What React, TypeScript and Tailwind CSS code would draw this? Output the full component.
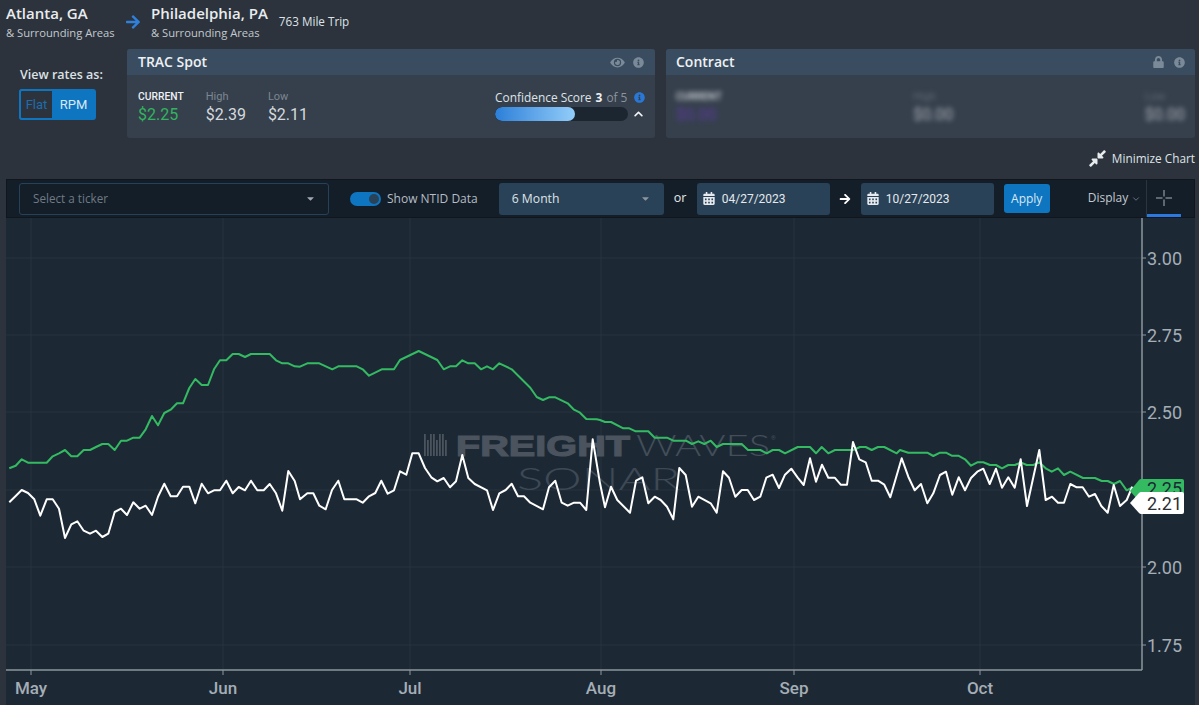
import React from "react";
import { FaEye, FaInfoCircle, FaLock, FaCalendarAlt, FaArrowRight, FaChevronUp, FaCompressAlt, FaCaretDown } from "react-icons/fa";
import { ChevronDown } from "lucide-react";

const seg = (ox: number, oy: number, a: number[]) => {
  const out: string[] = [];
  for (let i = 0; i < a.length; i += 2) out.push(`${(ox + a[i] / 3).toFixed(1)},${(oy + a[i + 1] / 3).toFixed(1)}`);
  return out;
};

const green = [
  ...seg(0, 340, [28,385,47,377,65,358,84,368,103,368,121,368,140,368,158,349,177,340,195,330,214,349,232,349,251,330,270,330,288,321,307,312,325,312,344,330,363,302,381,302,400,293,419,293,437,268,456,228,474,256,493,219,512,209,531,190,549,190,568,144,586,117,605,135,624,135,642,88,660,61,679,61,698,42,716,42,735,51,753,42,772,42,791,42,809,42,828,61,847,70,865,70,884,79]),
  ...seg(300, 340, [0,80,22,70,58,70,97,88,115,79,170,79,188,88,207,107,245,88,282,88,300,60,356,33,412,60,431,88,450,79,468,79,487,61,505,70,524,70,543,88,561,79,579,88,598,70,635,88,691,143,710,171,729,180,747,172,766,172,803,190,822,209,840,218,859,237,890,238]),
  ...seg(600, 400, [0,60,15,66,33,66,70,85,88,85,107,94,145,94,164,113,201,113,220,122,258,122,276,132,295,124,313,132,332,122,350,141,369,132,425,132,444,150,481,150,500,160,518,150,537,150,555,160,593,141,630,141,648,160,665,141,685,160,705,150,760,150,780,141,797,141,815,150,834,141,853,141,890,160]),
  ...seg(900, 420, [0,90,25,98,82,98,100,108,120,98,138,98,155,107,175,107,195,118,213,137,232,127,250,127,270,135,288,135,306,145,325,135,345,135,362,127,380,135,400,135,418,127,437,145,455,155,474,145,492,165,511,155,549,174,585,174,605,183,623,183,642,192,660,183,680,211,697,202]),
].join(" ");

const white = [
  ...seg(0, 340, [28,487,47,468,65,450,84,459,103,478,121,527,140,478,158,478,177,506,195,594,214,553,232,544,251,572,270,581,288,572,307,591,325,581,344,516,363,506,381,525,400,487,419,506,437,497,456,525,474,470,493,431,512,469,531,469,549,440,568,440,586,490,605,431,624,460,642,451,660,451,679,422,698,460,716,441,735,451,753,422,772,451,791,451,809,432,828,460,847,512,865,393,884,423]),
  ...seg(300, 340, [0,478,22,460,40,460,58,497,77,508,96,450,115,422,133,478,170,478,188,488,207,469,226,459,244,422,263,461,282,451,300,394,319,404,337,340,356,340,375,384,394,412,412,424,431,414,450,442,468,424,487,345,505,414,524,432,561,451,579,510,598,460,617,450,635,431,654,469,672,469,691,488,729,508,747,442,766,422,785,488,803,497,822,488,840,488,859,510,878,298]),
  ...seg(600, 400, [0,250,15,322,33,260,52,300,90,338,108,242,127,232,145,310,164,290,182,300,201,320,220,358,238,204,257,225,276,320,295,290,332,310,350,338,369,214,387,233,406,290,425,270,443,270,462,300,481,290,499,233,518,224,537,264,555,224,574,206,593,233,611,255,630,175,648,245,666,194,685,233,704,233,722,254,741,254,759,126,778,178,797,187,815,242,834,242,853,254,871,292]),
  ...seg(900, 420, [5,115,25,170,44,211,63,192,82,250,100,220,120,165,138,155,157,224,176,172,195,211,213,174,232,155,250,146,269,192,288,146,306,203,325,172,344,203,362,118,381,258,418,90,437,240,456,230,474,248,492,248,511,192,530,202,548,202,567,230,585,222,604,258,623,278,641,195,660,258,680,240,697,200]),
].join(" ");

const yTicks = [
  { y: 258, l: "3.00" },
  { y: 335, l: "2.75" },
  { y: 412, l: "2.50" },
  { y: 490, l: "" },
  { y: 567, l: "2.00" },
  { y: 645, l: "1.75" },
];
const xTicks = [
  { x: 31, l: "May" },
  { x: 223, l: "Jun" },
  { x: 410, l: "Jul" },
  { x: 601, l: "Aug" },
  { x: 794, l: "Sep" },
  { x: 980, l: "Oct" },
];

function Chart() {
  return (
    <svg viewBox="6 218 1189 487" className="block w-[1189px] h-[487px] bg-[#1c2935]" style={{ fontFamily: "Roboto, sans-serif" }}>
      {yTicks.map((t) => (
        <line key={t.y} x1={6} x2={1142} y1={t.y} y2={t.y} stroke="#27353f" strokeWidth={1} />
      ))}
      {xTicks.map((t) => (
        <line key={t.x} x1={t.x} x2={t.x} y1={218} y2={670} stroke="#27353f" strokeWidth={1} />
      ))}
      {/* watermark */}
      <g fill="#4a535e">
        {[424, 427, 430, 433, 436, 439, 442, 445].map((x, i) => (
          <rect key={x} x={x} y={i % 3 === 1 ? 440 : 434} width={1.8} height={i % 3 === 1 ? 16 : 22} />
        ))}
        <text x={456} y={456} fontSize={30} fontWeight={700} stroke="#4a535e" strokeWidth={1.2} textLength={174} lengthAdjust="spacingAndGlyphs" style={{ fontFamily: "Liberation Sans, sans-serif" }}>FREIGHT</text>
        <text x={636} y={456} fontSize={30} fontWeight={300} textLength={134} lengthAdjust="spacingAndGlyphs" fill="#434e59" style={{ fontFamily: "Lato, sans-serif" }}>WAVES</text>
        <text x={771} y={440} fontSize={6} fill="#434e59">®</text>
        <text x={517} y={490} fontSize={32} fontWeight={300} textLength={163} lengthAdjust="spacingAndGlyphs" fill="#3e4955" style={{ fontFamily: "Lato, sans-serif" }}>SONAR</text>
      </g>
      <polyline points={green} fill="none" stroke="#34bb62" strokeWidth={2} strokeLinejoin="round" />
      <polyline points={white} fill="none" stroke="#ffffff" strokeWidth={2} strokeLinejoin="round" />
      {/* axes */}
      <line x1={1142} x2={1142} y1={218} y2={670} stroke="#8d969e" strokeWidth={1.5} />
      <line x1={6} x2={1142} y1={670} y2={670} stroke="#8d969e" strokeWidth={1.5} />
      {xTicks.map((t) => (
        <g key={t.l}>
          <line x1={t.x} x2={t.x} y1={670} y2={675} stroke="#8d969e" strokeWidth={1} />
          <text x={t.x} y={694} fontSize={17} fontWeight={500} textAnchor="middle" fill="#a5adb5">{t.l}</text>
        </g>
      ))}
      {yTicks.map((t) => (
        <g key={t.y}>
          <line x1={1142} x2={1146} y1={t.y} y2={t.y} stroke="#8d969e" strokeWidth={1} />
          {t.l && <text x={1147} y={t.y + 6.5} fontSize={18} fill="#a5adb5">{t.l}</text>}
        </g>
      ))}
      {/* value tags */}
      <path d="M1130 491 L1139 480 Q1140 479 1141 479 L1182 479 Q1184 479 1184 481 L1184 500 L1138 500 Z" fill="#34bb62" />
      <text x={1147} y={495} fontSize={18} fill="#1c2935">2.25</text>
      <path d="M1130 503 L1139 493 Q1140 492 1141 492 L1182 492 Q1184 492 1184 494 L1184 512 Q1184 514 1182 514 L1141 514 Q1140 514 1139 513 Z" fill="#ffffff" />
      <text x={1147} y={509.5} fontSize={18} fill="#2b2f33">2.21</text>
    </svg>
  );
}

function Stat({ label, value, labelCls, valueCls }: { label: string; value: string; labelCls: string; valueCls: string }) {
  return (
    <div className="flex flex-col">
      <span className={`leading-[14px] ${labelCls}`}>{label}</span>
      <span className={`text-[16px] leading-[22px] ${valueCls}`}>{value}</span>
    </div>
  );
}

function DateBox({ v, w }: { v: string; w: string }) {
  return (
    <div className={`flex items-center h-[32px] ${w} rounded-[3px] bg-[#2a4257] pl-[6px] text-[#e4e9ed]`}>
      <FaCalendarAlt className="w-[12px] h-[13px] text-[#e6eaee]" />
      <span className="ml-[7px] mt-[1px] text-[12px] font-['Roboto',sans-serif]">{v}</span>
    </div>
  );
}

export default function App() {
  return (
    <div className="w-[1199px] h-[705px] overflow-hidden bg-[#2c333c] font-['Open_Sans',sans-serif] text-[#e6e9ec]">
      {/* Route */}
      <div className="flex items-start h-[49px] pl-[6px] pt-[3px]">
        <div className="w-[119px]">
          <div className="text-[15px] leading-[20px] font-semibold text-[#e9ecef]">Atlanta, GA</div>
          <div className="text-[11.2px] leading-[15px] text-[#c3c9cf] mt-[2px]">&amp; Surrounding Areas</div>
        </div>
        <FaArrowRight className="w-[16px] h-[16px] text-[#2f80dc] mt-[11px]" />
        <div className="ml-[10px]">
          <div className="text-[15px] leading-[20px] font-semibold text-[#e9ecef]">Philadelphia, PA</div>
          <div className="text-[11.2px] leading-[15px] text-[#c3c9cf] mt-[2px]">&amp; Surrounding Areas</div>
        </div>
        <div className="ml-[11px] mt-[10px] text-[11.7px] leading-[16px] text-[#dfe3e7]">763 Mile Trip</div>
      </div>

      {/* Rate cards */}
      <div className="flex items-start h-[89px]">
        <div className="w-[127px] pl-[19px] pt-[18px] shrink-0">
          <div className="pl-[1px] text-[12.5px] leading-[16px] font-semibold text-[#dde1e5]">View rates as:</div>
          <div className="flex mt-[6px] w-[77px] h-[31px] rounded-[3px] overflow-hidden bg-[#0e75c0] text-[13px] font-['Roboto',sans-serif]">
            <div className="w-[35px] flex items-center justify-center rounded-l-[3px] border-2 border-[#0e75c0] bg-[#2c333c] text-[#1f6cae]">Flat</div>
            <div className="flex-1 flex items-center justify-center pr-[3px] text-[#d9e9f5]">RPM</div>
          </div>
        </div>

        <div className="w-[528px] h-[89px] rounded-[3px] overflow-hidden bg-[#36404d] shrink-0">
          <div className="flex items-center h-[26px] bg-[#3a4d60] pl-[11px] pr-[11px]">
            <span className="-mt-[2px] text-[14px] font-semibold text-[#eef1f3]">TRAC Spot</span>
            <FaEye className="ml-auto w-[15px] h-[13px] text-[#7b8a98]" />
            <FaInfoCircle className="ml-[8px] w-[11px] h-[11px] text-[#7b8a98]" />
          </div>
          <div className="flex items-start pl-[11px] pr-[10px] pt-[15px] font-['Roboto',sans-serif]">
            <Stat label="CURRENT" value="$2.25" labelCls="font-medium text-[10.3px] text-[#eef1f3]" valueCls="text-[#32b45f]" />
            <div className="ml-[22px]">
              <Stat label="High" value="$2.39" labelCls="text-[11px] text-[#7d8791]" valueCls="text-[#d5d9dd]" />
            </div>
            <div className="ml-[22px]">
              <Stat label="Low" value="$2.11" labelCls="text-[11px] text-[#7d8791]" valueCls="text-[#d5d9dd]" />
            </div>
            <div className="ml-auto w-[150px] font-['Open_Sans',sans-serif]">
              <div className="flex items-center h-[14px] text-[11.9px] leading-[14px]">
                <span className="text-[#dfe3e7]">Confidence Score</span>
                <span className="ml-[4px] font-bold text-[#eef1f3]">3</span>
                <span className="ml-[4px] text-[#8b949d]">of 5</span>
                <FaInfoCircle className="ml-auto w-[11px] h-[11px] text-[#2a78d6]" />
              </div>
              <div className="flex items-center mt-[3px]">
                <div className="w-[133px] h-[14px] rounded-full bg-[#1c2630] overflow-hidden">
                  <div className="w-[80px] h-full rounded-full bg-gradient-to-r from-[#2a7fd8] to-[#92cdf9]" />
                </div>
                <FaChevronUp className="ml-auto w-[13px] h-[10px] text-[#f1f3f5]" />
              </div>
            </div>
          </div>
        </div>

        <div className="ml-[11px] w-[529px] h-[89px] rounded-[3px] overflow-hidden bg-[#36404d] shrink-0">
          <div className="flex items-center h-[26px] bg-[#3a4d60] pl-[10px] pr-[10px]">
            <span className="-mt-[2px] text-[14px] font-semibold text-[#eef1f3]">Contract</span>
            <FaLock className="ml-auto w-[11px] h-[12px] text-[#7b8a98]" />
            <FaInfoCircle className="ml-[10px] w-[11px] h-[11px] text-[#7b8a98]" />
          </div>
          <div className="flex justify-between pl-[10px] pr-[10px] pt-[15px] blur-[2.5px] font-['Roboto',sans-serif]">
            <Stat label="CURRENT" value="$0.00" labelCls="font-medium text-[10.3px] text-[#d5d9dd]" valueCls="text-[#5d3aa0]" />
            <Stat label="High" value="$0.00" labelCls="text-[11px] text-[#5f6a75]" valueCls="text-[#aab1b8]" />
            <Stat label="Low" value="$0.00" labelCls="text-[11px] text-[#5f6a75]" valueCls="text-[#aab1b8]" />
          </div>
        </div>
      </div>

      {/* Minimize */}
      <div className="flex items-center justify-end h-[41px] pr-[4px]">
        <FaCompressAlt className="w-[19px] h-[19px] text-[#e8ebee]" />
        <span className="ml-[5px] text-[11.8px] text-[#dfe3e7]">Minimize Chart</span>
      </div>

      {/* Chart panel */}
      <div className="ml-[6px] w-[1189px]">
        <div className="flex items-center h-[39px] bg-[#141e28] border border-[#10161c] pl-[12px] text-[12px]">
          <div className="flex items-center w-[310px] h-[32px] rounded-[3px] border border-[#26425a] pl-[13px] pr-[12px] text-[#6f7a85]">
            <span className="text-[11.7px] mt-[1px]">Select a ticker</span>
            <FaCaretDown className="ml-auto w-[11px] h-[11px] text-[#a2a8ae]" />
          </div>
          <div className="ml-[21px] relative w-[31px] h-[14px] rounded-full bg-[#0e75c0]">
            <div className="absolute right-[2px] top-[2px] w-[10px] h-[10px] rounded-full bg-[#2a4257]" />
          </div>
          <span className="ml-[6px] text-[#b6bdc4]">Show NTID Data</span>
          <div className="ml-[21px] flex items-center w-[165px] h-[32px] rounded-[3px] bg-[#2a4257] pl-[13px] pr-[13px] text-[#dfe3e7] text-[12.2px]">
            <span className="mt-[1px]">6 Month</span>
            <FaCaretDown className="ml-auto w-[11px] h-[11px] text-[#8d959d]" />
          </div>
          <span className="ml-[10px] w-[23px] text-[#e6e9ec] text-[12.5px]">or</span>
          <DateBox v="04/27/2023" w="w-[133px]" />
          <FaArrowRight className="ml-[9px] w-[12px] h-[12px] text-white" />
          <div className="ml-[10px]"><DateBox v="10/27/2023" w="w-[133px]" /></div>
          <div className="ml-[10px] flex items-center justify-center w-[46px] h-[29px] rounded-[3px] bg-[#0e75c0] text-[12px] text-[#dbe9f4]">Apply</div>
          <span className="ml-[38px] -mt-[2px] text-[#c3c9cf]">Display</span>
          <ChevronDown className="ml-[3px] w-[10px] h-[10px] text-[#9aa2aa]" strokeWidth={1.5} />
          <div className="relative ml-[5px] w-[35px] h-[37px] border-l border-[#2a3540]">
            <svg viewBox="0 0 16 16" className="absolute left-[9px] top-[10px] w-[16px] h-[16px]">
              <path d="M0 8H6.5M9.5 8H16M8 0V6.5M8 9.5V16" stroke="#a9b0b7" strokeWidth={1} fill="none" />
            </svg>
            <div className="absolute left-0 right-0 bottom-0 h-[3px] bg-[#2a78e0]" />
          </div>
        </div>
        <Chart />
      </div>
    </div>
  );
}
